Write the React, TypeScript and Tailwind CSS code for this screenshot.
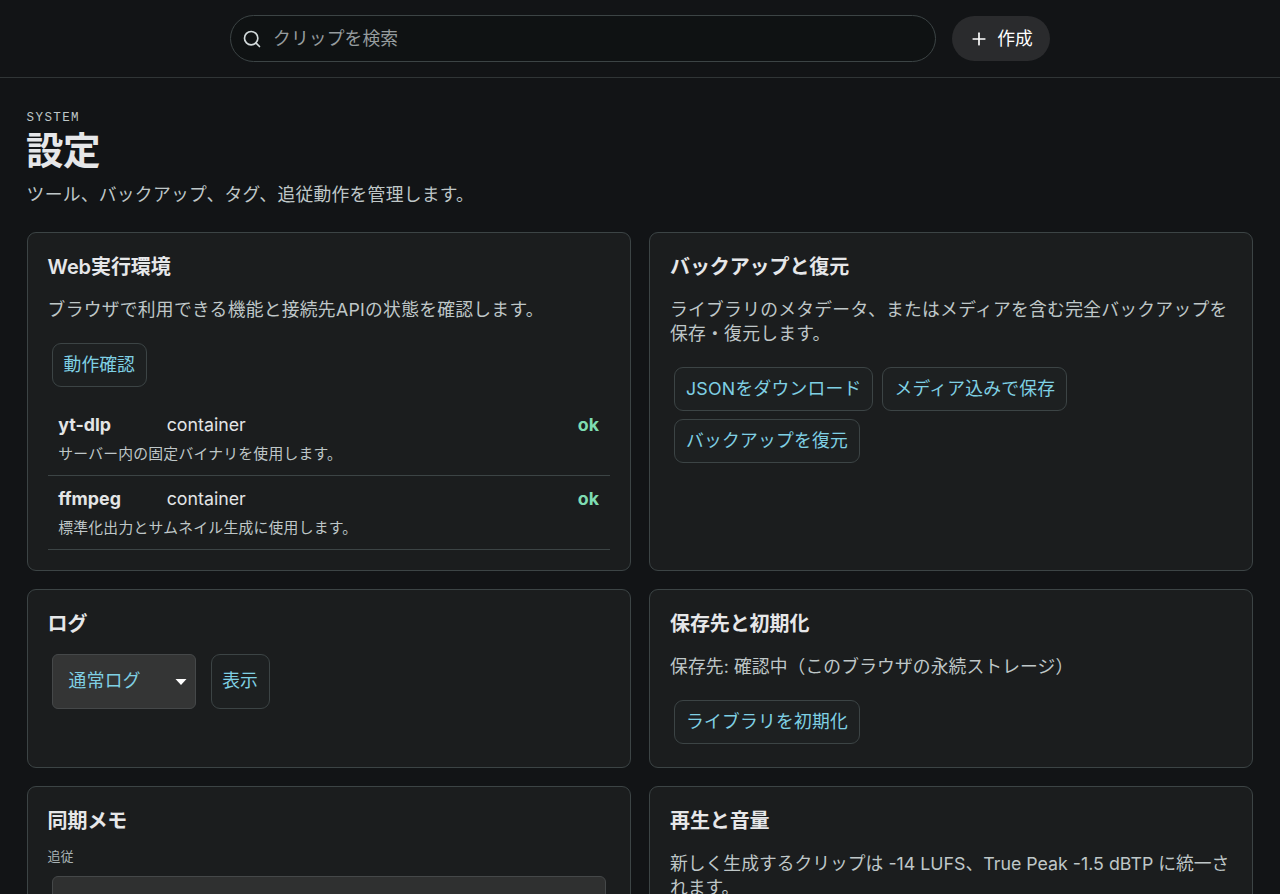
import React from 'react';
import { Plus, Search } from 'lucide-react';

const Card: React.FC<{ title: string; children?: React.ReactNode }> = ({ title, children }) => (
  <section className="min-w-0 rounded-[9px] border border-[#3c4445] bg-[#1b1d1e] p-5">
    <h2 className="text-[20px] font-semibold leading-[29px] tracking-[-0.1px] text-[#e6e7e9]">{title}</h2>
    {children}
  </section>
);

const Description: React.FC<{ children: React.ReactNode; className?: string }> = ({
  children,
  className = 'tracking-[0.26px]',
}) => <p className={`mt-4 whitespace-nowrap leading-6 text-[#bfc7c8] ${className}`}>{children}</p>;

const Toolbar: React.FC<{ children: React.ReactNode }> = ({ children }) => (
  <div className="mt-[17px] flex flex-wrap gap-x-[9px] gap-y-2 p-1">{children}</div>
);

const ActionButton: React.FC<{ children: React.ReactNode; className?: string }> = ({
  children,
  className = 'tracking-[0.22px]',
}) => (
  <button
    className={`h-11 whitespace-nowrap rounded-[9px] border border-[#3c4445] bg-[#1d2021] px-[11px] pt-px text-[#7fd0e4] ${className}`}
  >
    {children}
  </button>
);

const tools = [
  { name: 'yt-dlp', source: 'container', note: 'サーバー内の固定バイナリを使用します。' },
  { name: 'ffmpeg', source: 'container', note: '標準化出力とサムネイル生成に使用します。' },
];

export default function App() {
  return (
    <div className="h-[894px] overflow-hidden bg-[#121416] font-['Inter','Noto_Sans_CJK_JP',sans-serif] text-[17.8px] text-[#e3e5e6]">
      <header className="flex h-[78px] items-center justify-center gap-4 border-b border-[#303536]">
        <div className="flex h-[47px] w-[706px] items-center gap-[11px] rounded-full border border-[#3c4445] bg-[#0f1213] px-[11px]">
          <Search size={20} className="text-[#d3dadb]" />
          <span className="pt-0.5 tracking-[0.1px] text-[#969c9e]">クリップを検索</span>
        </div>
        <button className="flex h-[45px] w-[98px] items-center justify-center gap-2 whitespace-nowrap rounded-full bg-[#2a2b2d] text-white">
          <Plus size={20} />
          <span className="pt-0.5">作成</span>
        </button>
      </header>

      <main className="px-[26.6px] pt-8">
        <div className="font-['Liberation_Mono',monospace] text-[12.5px] leading-4 tracking-[1.4px] text-[#bfc7c8]">SYSTEM</div>
        <h1 className="-ml-[0.6px] text-[37.5px] font-semibold leading-[49px] tracking-[-0.5px] text-[#e6e7e9]">設定</h1>
        <p className="mt-2 leading-6 tracking-[0.26px] text-[#bfc7c8]">ツール、バックアップ、タグ、追従動作を管理します。</p>

        <div className="mt-[25px] grid grid-cols-2 grid-rows-[339px_179.4px_300px] gap-[18px]">
          <Card title="Web実行環境">
            <Description>ブラウザで利用できる機能と接続先APIの状態を確認します。</Description>
            <Toolbar>
              <ActionButton className="tracking-normal">動作確認</ActionButton>
            </Toolbar>
            <ul className="mt-[11px]">
              {tools.map((tool) => (
                <li key={tool.name} className="h-[74px] border-b border-[#3c4445] pl-[10.6px] pr-[11px] pt-2.5">
                  <div className="flex leading-[26px]">
                    <strong className="w-[108.5px]">{tool.name}</strong>
                    <span className="flex-1">{tool.source}</span>
                    <strong className="text-[#7edcb2]">ok</strong>
                  </div>
                  <div className="mt-[5px] text-[14.8px] leading-[22px] tracking-[0.25px] text-[#bfc7c8]">{tool.note}</div>
                </li>
              ))}
            </ul>
          </Card>

          <Card title="バックアップと復元">
            <Description>
              ライブラリのメタデータ、またはメディアを含む完全バックアップを
              <br />
              保存・復元します。
            </Description>
            <Toolbar>
              <ActionButton>JSONをダウンロード</ActionButton>
              <ActionButton>メディア込みで保存</ActionButton>
              <ActionButton>バックアップを復元</ActionButton>
            </Toolbar>
          </Card>

          <Card title="ログ">
            <div className="mt-[15px] flex h-[55px] gap-[15px] pl-1">
              <button className="flex w-36 items-center justify-between rounded-md border border-[#454849] bg-[#343535] pl-4 pr-2 text-[#7fd0e4]">
                <span className="tracking-[0.3px]">通常ログ</span>
                <svg width="12" height="6" viewBox="0 0 12 6" fill="white">
                  <path d="M0.5 0h11L6 6z" />
                </svg>
              </button>
              <button className="w-[59px] whitespace-nowrap rounded-[9px] border border-[#3c4445] bg-[#1d2021] text-[#7fd0e4]">
                表示
              </button>
            </div>
          </Card>

          <Card title="保存先と初期化">
            <Description className="tracking-[0.1px]">保存先: 確認中（このブラウザの永続ストレージ）</Description>
            <Toolbar>
              <ActionButton>ライブラリを初期化</ActionButton>
            </Toolbar>
          </Card>

          <Card title="同期メモ">
            <div className="mt-[11px] text-[13px] leading-[18px] text-[#a9b3b5]">追従</div>
            <div className="ml-1 mr-1 mt-[11px] h-14 rounded-md border border-[#454849] bg-[#2f3030]" />
          </Card>

          <Card title="再生と音量">
            <Description className="tracking-normal">
              新しく生成するクリップは -14 LUFS、True Peak -1.5 dBTP に統一さ
              <br />
              れます。
            </Description>
          </Card>
        </div>
      </main>
    </div>
  );
}
